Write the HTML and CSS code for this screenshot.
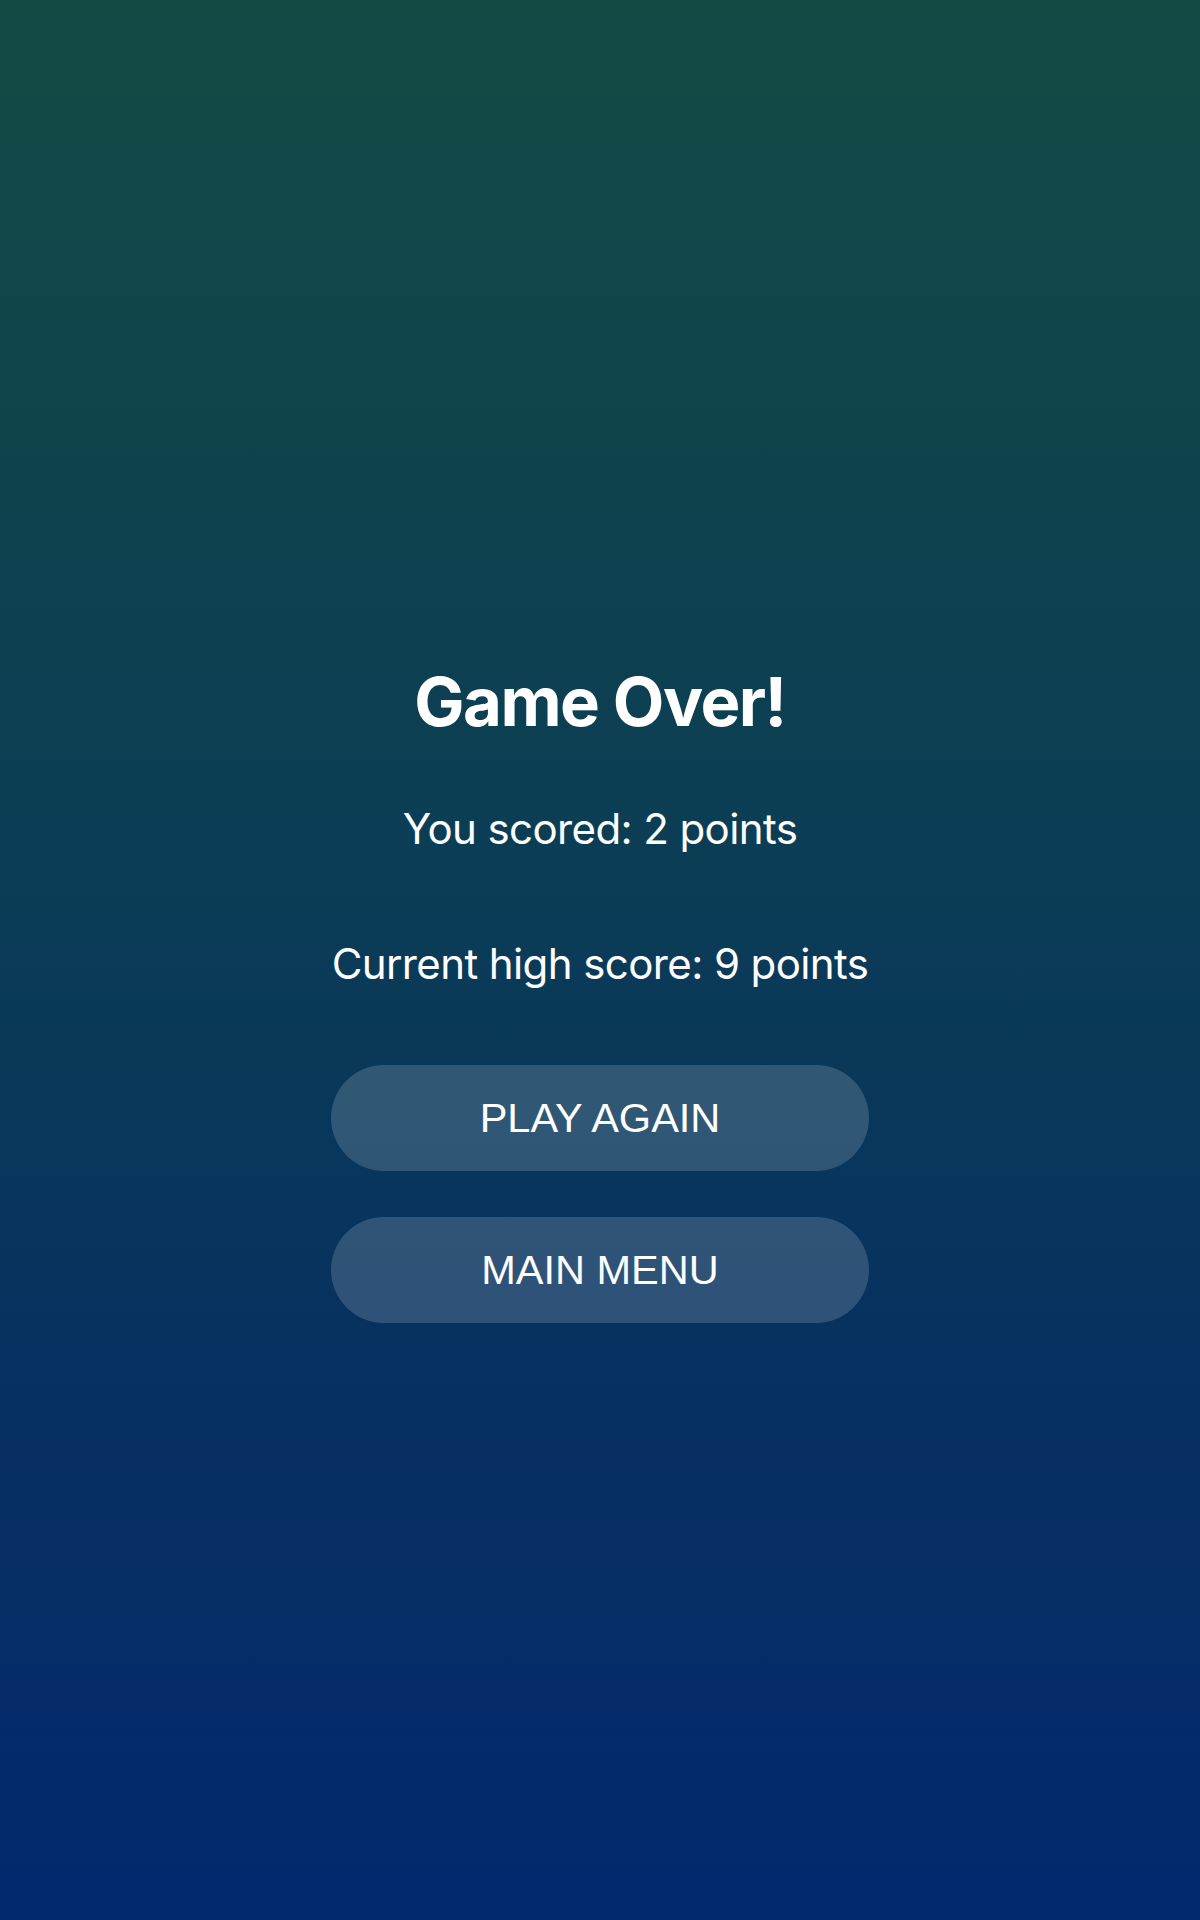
FILE: index.html
```html
<!DOCTYPE html>
<html lang="en">
<head>
<meta charset="utf-8">
<title>Game Over</title>
<link rel="stylesheet" href="styles.css">
</head>
<body>
<main class="screen">
  <section class="panel">
    <h1 class="title">Game Over!</h1>
    <p class="line line-score">You scored: 2 points</p>
    <p class="line line-high">Current high score: 9 points</p>
    <div class="actions">
      <button class="btn">PLAY AGAIN</button>
      <button class="btn">MAIN MENU</button>
    </div>
  </section>
</main>
</body>
</html>
```
FILE: styles.css
```css
html, body {
  margin: 0;
  padding: 0;
  height: 100%;
}
body {
  background: linear-gradient(180deg, #124b44 0%, #0b3d55 45%, #062f62 75%, #02296e 100%);
  color: #ffffff;
  font-family: Inter, "Noto Sans", sans-serif;
}
.screen {
  min-height: 1920px;
  display: flex;
  flex-direction: column;
  align-items: center;
  box-sizing: border-box;
  padding-top: 662px;
}
.panel {
  width: 538px;
  display: flex;
  flex-direction: column;
  align-items: center;
}
.title {
  margin: 0;
  font-size: 67px;
  font-weight: 700;
  letter-spacing: -1.5px;
  line-height: 80px;
}
.line {
  margin: 0;
  font-size: 42px;
  font-weight: 400;
  letter-spacing: -0.6px;
  line-height: 50px;
}
.line-score { margin-top: 62px; }
.line-high { margin-top: 85px; }
.actions {
  margin-top: 76px;
  width: 100%;
  display: flex;
  flex-direction: column;
  gap: 46px;
}
.btn {
  width: 100%;
  height: 106px;
  border: none;
  border-radius: 53px;
  background: rgba(255, 255, 255, 0.16);
  color: #ffffff;
  font-family: "Liberation Sans", Arial, sans-serif;
  font-size: 41.5px;
  letter-spacing: 0;
  cursor: pointer;
}
```
